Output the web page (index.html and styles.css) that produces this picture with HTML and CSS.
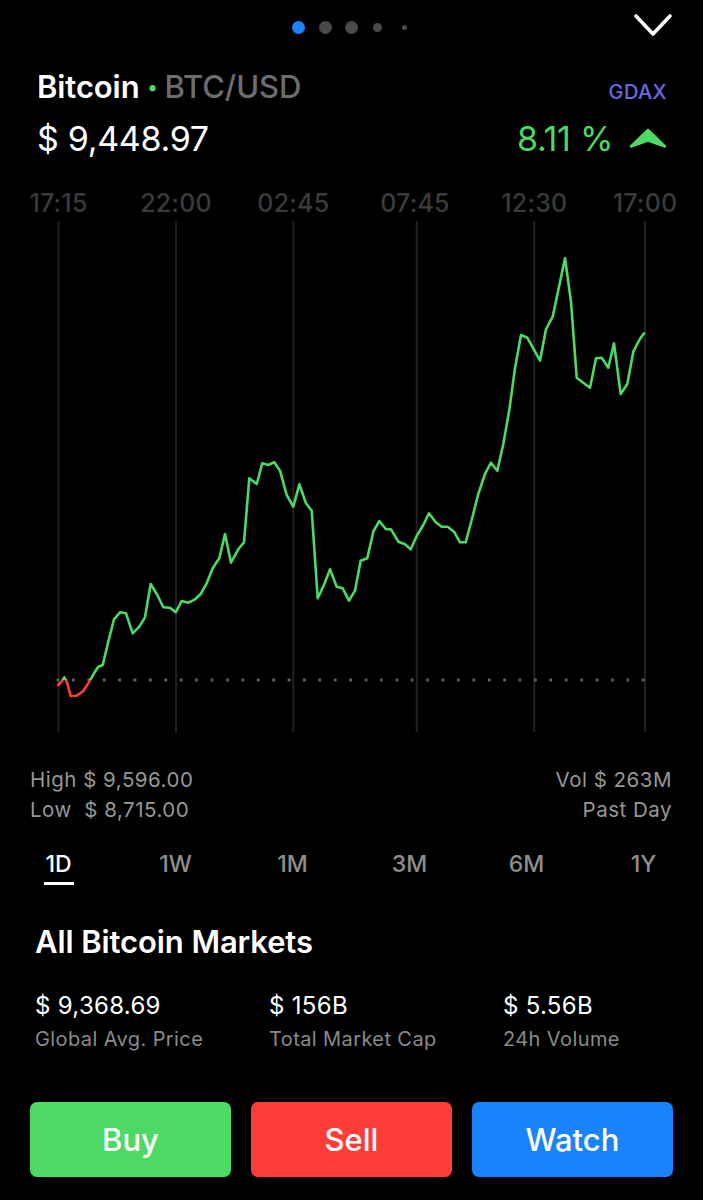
FILE: index.html
```html
<!DOCTYPE html>
<html lang="en">
<head>
<meta charset="utf-8">
<title>Bitcoin</title>
<link rel="stylesheet" href="styles.css">
</head>
<body>
<div class="screen">
  <div class="topbar">
    <div></div>
    <div class="pager">
      <span class="slot"><span class="dot dot-active"></span></span>
      <span class="slot"><span class="dot"></span></span>
      <span class="slot"><span class="dot"></span></span>
      <span class="slot"><span class="dot dot-sm"></span></span>
      <span class="slot"><span class="dot dot-xs"></span></span>
    </div>
    <div class="close">
      <svg width="42" height="26" viewBox="0 0 42 26"><polyline points="4,4 21,22 38,4" fill="none" stroke="#fff" stroke-width="3.6" stroke-linecap="round" stroke-linejoin="round"/></svg>
    </div>
  </div>

  <div class="header">
    <div class="row row-title">
      <div class="title"><span class="name">Bitcoin</span><span class="sep">•</span><span class="pair">BTC/USD</span></div>
      <div class="exchange">GDAX</div>
    </div>
    <div class="row row-price">
      <div class="price">$ 9,448.97</div>
      <div class="change">8.11 %
        <svg class="up" width="38" height="21" viewBox="0 0 38 21"><path d="M19,2 L36,18.5 L19,12.5 L2,18.5 Z" fill="#4cd964" stroke="#4cd964" stroke-width="2.5" stroke-linejoin="round"/></svg>
      </div>
    </div>
  </div>

  <svg class="chart" width="703" height="560" viewBox="0 180 703 560">
    <defs>
      <clipPath id="above"><rect x="0" y="180" width="703" height="500"/></clipPath>
      <clipPath id="below"><rect x="0" y="680" width="703" height="60"/></clipPath>
    </defs>
    <g class="labels" fill="#3b3b3b" text-anchor="middle">
      <text x="58.5" y="212">17:15</text>
      <text x="176" y="212">22:00</text>
      <text x="293.3" y="212">02:45</text>
      <text x="415" y="212">07:45</text>
      <text x="534.3" y="212">12:30</text>
      <text x="645" y="212">17:00</text>
    </g>
    <g stroke="#222" stroke-width="2">
      <line x1="58.5" y1="221" x2="58.5" y2="732"/>
      <line x1="176" y1="221" x2="176" y2="732"/>
      <line x1="293.3" y1="221" x2="293.3" y2="732"/>
      <line x1="416.7" y1="221" x2="416.7" y2="732"/>
      <line x1="534.3" y1="221" x2="534.3" y2="732"/>
      <line x1="645" y1="221" x2="645" y2="732"/>
    </g>
    <line x1="58" y1="680" x2="650" y2="680" stroke="#5c5c5c" stroke-width="3.4" stroke-linecap="round" stroke-dasharray="0 15.4"/>
    <polyline clip-path="url(#above)" fill="none" stroke="#4cd964" stroke-width="2.6" stroke-linejoin="round" stroke-linecap="round"
      points="58.3,685 62.3,680.7 64.3,677.3 66.7,681.7 70.7,696 76.7,695.7 82.7,691.7 89.3,681.7 95,671.7 98.3,666.7 102.7,665 108.3,641.7 114,619.3 120,612.3 126,613.3 132.7,633.3 139.3,626.7 145,617.3 150.7,584 157.3,595 163.3,607.3 170,607.7 175.7,612.3 181.7,601 188.3,602.7 195,599.3 200.7,594 206.7,583.3 212.7,568.3 219.3,558.3 225,534 231,562.7 238.3,549.3 244,542.3 249.3,478.3 256.7,484 262.3,463.3 268.3,465 274.3,462.3 280,470.7 286.7,495 293.3,506.7 299.3,484.3 306,503.3 311.7,510.7 317.7,598.3 324,585 330,569.3 336.7,586.7 342.7,588.3 349,600.7 355,590.7 360.7,560.7 367.3,558.3 373.3,531.7 379.3,521 386,529.3 391,529.3 398.3,541.7 405,544.3 410.7,549.3 416.7,536 423.3,525 429,513.3 435.7,522.3 441.7,526.7 447.7,526.7 454,531.7 460,542.3 465.7,542.3 471.7,520 478.3,494 485,474 491,462.7 497.3,470.7 503.3,444 509.3,410 515,368.3 521,335 527.3,337.7 533.3,348.3 540,360.7 546,329.3 552.7,316.7 558.3,290 565,258.3 571,301.7 576.7,377.7 583.3,382.7 590,387.7 596,358.3 601.7,357.7 608.3,367.7 614,343.3 620.7,394 627.3,384 633.3,351.7 639.3,340 644,333.3"/>
    <polyline clip-path="url(#below)" fill="none" stroke="#fc3d39" stroke-width="2.6" stroke-linejoin="round" stroke-linecap="round"
      points="58.3,685 62.3,680.7 64.3,677.3 66.7,681.7 70.7,696 76.7,695.7 82.7,691.7 89.3,681.7 95,671.7"/>
  </svg>

  <div class="range">
    <div class="range-col">
      <div>High $ 9,596.00</div>
      <div>Low&nbsp; $ 8,715.00</div>
    </div>
    <div class="range-col range-right">
      <div>Vol $ 263M</div>
      <div>Past Day</div>
    </div>
  </div>

  <div class="tabs">
    <div class="tab tab-active"><span>1D</span><i class="underline"></i></div>
    <div class="tab"><span>1W</span></div>
    <div class="tab"><span>1M</span></div>
    <div class="tab"><span>3M</span></div>
    <div class="tab"><span>6M</span></div>
    <div class="tab"><span>1Y</span></div>
  </div>

  <h2 class="markets-title">All Bitcoin Markets</h2>
  <div class="markets">
    <div class="stat"><div class="stat-value">$ 9,368.69</div><div class="stat-label">Global Avg. Price</div></div>
    <div class="stat"><div class="stat-value">$ 156B</div><div class="stat-label">Total Market Cap</div></div>
    <div class="stat"><div class="stat-value">$ 5.56B</div><div class="stat-label">24h Volume</div></div>
  </div>

  <div class="actions">
    <button class="btn btn-buy">Buy</button>
    <button class="btn btn-sell">Sell</button>
    <button class="btn btn-watch">Watch</button>
  </div>
</div>
</body>
</html>
```

FILE: styles.css
```css
* { box-sizing: border-box; }
html, body { margin: 0; padding: 0; background: #000; }
body {
  font-family: Inter, "Noto Sans", "Liberation Sans", sans-serif;
  color: #fff;
  width: 703px;
  height: 1200px;
  overflow: hidden;
}
.screen { width: 703px; }

.topbar {
  height: 54px;
  display: grid;
  grid-template-columns: 1fr auto 1fr;
  align-items: center;
}
.pager { display: flex; align-items: center; }
.slot { width: 26.3px; display: flex; justify-content: center; align-items: center; }
.dot { width: 13px; height: 13px; border-radius: 50%; background: #4a4a4a; display: block; }
.dot-active { background: #1a82fb; }
.dot-sm { width: 9px; height: 9px; }
.dot-xs { width: 5px; height: 5px; }
.close { justify-self: end; padding-right: 29px; display: flex; margin-top: -4px; }
.close svg { display: block; }

.header { padding: 16px 36px 0 37px; }
.row { display: flex; justify-content: space-between; }
.row-title { height: 34px; align-items: flex-end; }
.title { font-size: 31px; line-height: 34px; font-weight: 600; letter-spacing: -0.1px; white-space: nowrap; }
.name { color: #fff; }
.sep { color: #4cd964; font-size: 20px; margin: 0 7px 0 8px; vertical-align: 4px; }
.pair { color: #6d6d6d; font-weight: 500; }
.exchange { color: #6b68e6; font-size: 20px; line-height: 20px; font-weight: 500; letter-spacing: 0.4px; margin-bottom: 2px; }
.row-price { margin-top: 15px; height: 40px; align-items: center; }
.price { font-size: 34px; line-height: 40px; font-weight: 400; letter-spacing: -0.3px; }
.change { color: #4cd964; font-size: 34px; line-height: 40px; display: flex; align-items: center; letter-spacing: -0.3px; }
.up { margin-left: 16px; margin-top: -2px; display: block; }

.chart { display: block; margin-top: 21px; }
.labels { font-family: Inter, "Noto Sans", sans-serif; font-weight: 500; font-size: 25px; letter-spacing: 0.2px; }

.range {
  margin-top: 25px;
  padding: 0 31px 0 30px;
  display: flex;
  justify-content: space-between;
  color: #979797;
  font-size: 20.5px;
  line-height: 30px;
  letter-spacing: 0.5px;
}
.range-right { text-align: right; }

.tabs {
  margin-top: 24px;
  display: grid;
  grid-template-columns: repeat(6, 117px);
}
.tab {
  display: flex;
  flex-direction: column;
  align-items: center;
  color: #8e8e8e;
  font-size: 23px;
  line-height: 30px;
  font-weight: 500;
}
.tab-active { color: #fff; }
.underline { display: block; width: 30px; height: 3px; background: #fff; margin-top: 3px; }

.markets-title {
  margin: 40px 0 0 35px;
  font-size: 31px;
  line-height: 34px;
  font-weight: 600;
  letter-spacing: -0.1px;
}
.markets {
  margin-top: 33px;
  padding-left: 35px;
  display: grid;
  grid-template-columns: repeat(3, 234px);
}
.stat-value { font-size: 24px; line-height: 28px; letter-spacing: 0.3px; }
.stat-label { color: #8a8a8a; font-size: 20px; line-height: 26px; margin-top: 6px; letter-spacing: 0.4px; }

.actions {
  margin-top: 50px;
  padding: 0 30px;
  display: grid;
  grid-template-columns: repeat(3, 1fr);
  column-gap: 20px;
}
.btn {
  height: 75px;
  border: 0;
  border-radius: 7px;
  color: #fff;
  font-family: Inter, "Noto Sans", sans-serif;
  font-size: 31px;
  font-weight: 500;
  letter-spacing: 0;
}
.btn-buy { background: #4cd964; }
.btn-sell { background: #fc3d39; }
.btn-watch { background: #1a82fb; }
```
